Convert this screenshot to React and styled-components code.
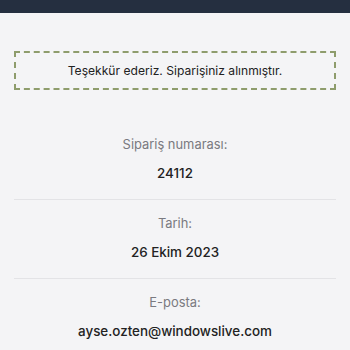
import React from "react";
import styled, { createGlobalStyle } from "styled-components";

const GlobalStyle = createGlobalStyle`
  html, body {
    margin: 0;
    padding: 0;
    background: #f4f4f6;
    font-family: Inter, "Noto Sans", sans-serif;
    color: #222;
  }
`;

const TopBar = styled.div`
  height: 13px;
  background: #252f40;
`;

const Page = styled.main`
  padding: 38px 14px 0;
`;

const Notice = styled.div`
  border: 2px dashed #8e9c6c;
  height: 35px;
  display: flex;
  align-items: center;
  justify-content: center;
  font-size: 12.1px;
  color: #222;
`;

const Details = styled.ul`
  list-style: none;
  margin: 46px 0 0;
  padding: 0;
`;

const Item = styled.li`
  display: flex;
  flex-direction: column;
  align-items: center;
  gap: 12px;
  padding: 0 0 17px;
  margin-bottom: 15px;
  border-bottom: ${(p) => (p.last ? "none" : "1px solid #e3e3e6")};
`;

const Label = styled.span`
  font-size: 12.9px;
  color: #7a7a80;
  line-height: 17px;
`;

const Value = styled.span`
  font-size: 13.4px;
  font-weight: 500;
  color: #222;
  line-height: 17px;
`;

const rows = [
  { label: "Sipariş numarası:", value: "24112" },
  { label: "Tarih:", value: "26 Ekim 2023" },
  { label: "E-posta:", value: "ayse.ozten@windowslive.com" },
];

export default function App() {
  return (
    <>
      <GlobalStyle />
      <TopBar />
      <Page>
        <Notice>Teşekkür ederiz. Siparişiniz alınmıştır.</Notice>
        <Details>
          {rows.map((r, i) => (
            <Item key={r.label} last={i === rows.length - 1}>
              <Label>{r.label}</Label>
              <Value>{r.value}</Value>
            </Item>
          ))}
        </Details>
      </Page>
    </>
  );
}
